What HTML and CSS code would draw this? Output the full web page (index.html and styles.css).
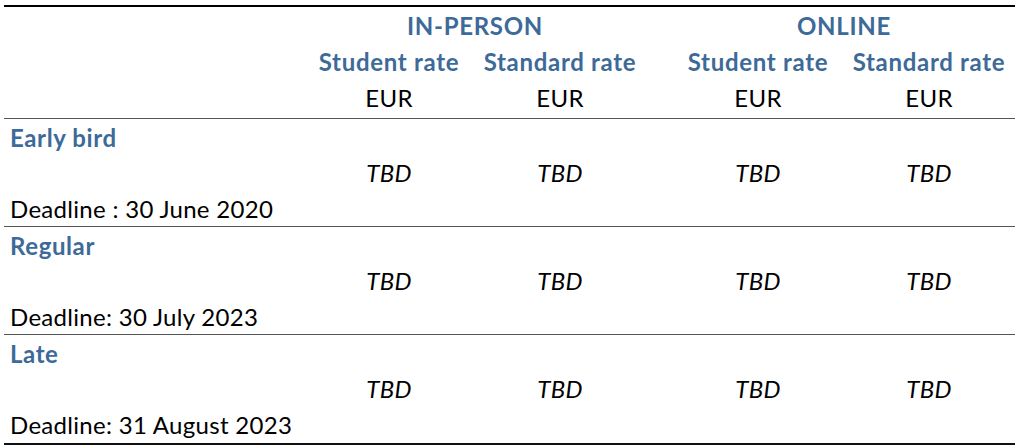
FILE: index.html
```html
<!DOCTYPE html>
<html lang="en">
<head>
<meta charset="utf-8">
<title>Fees</title>
<link rel="stylesheet" href="styles.css">
</head>
<body>
<div class="fees">
  <div class="head">
    <div class="grp g1">IN-PERSON</div>
    <div class="grp g2">ONLINE</div>
    <div class="rate c1">Student rate</div>
    <div class="rate c2">Standard rate</div>
    <div class="rate c3">Student rate</div>
    <div class="rate c4">Standard rate</div>
    <div class="cur c1">EUR</div>
    <div class="cur c2">EUR</div>
    <div class="cur c3">EUR</div>
    <div class="cur c4">EUR</div>
  </div>
  <div class="row">
    <div class="label">Early bird</div>
    <div class="val c1">TBD</div>
    <div class="val c2">TBD</div>
    <div class="val c3">TBD</div>
    <div class="val c4">TBD</div>
    <div class="deadline">Deadline : 30 June 2020</div>
  </div>
  <div class="row">
    <div class="label">Regular</div>
    <div class="val c1">TBD</div>
    <div class="val c2">TBD</div>
    <div class="val c3">TBD</div>
    <div class="val c4">TBD</div>
    <div class="deadline">Deadline: 30 July 2023</div>
  </div>
  <div class="row last">
    <div class="label">Late</div>
    <div class="val c1">TBD</div>
    <div class="val c2">TBD</div>
    <div class="val c3">TBD</div>
    <div class="val c4">TBD</div>
    <div class="deadline">Deadline: 31 August 2023</div>
  </div>
</div>
</body>
</html>
```
FILE: styles.css
```css
html, body {
  margin: 0;
  padding: 0;
  background: #ffffff;
}
body {
  padding: 5px 9px 0 4px;
  font-family: "Lato", "Liberation Sans", sans-serif;
  font-size: 24px;
  letter-spacing: 0.3px;
  color: #000000;
}
.fees {
  width: 1011px;
  border-top: 2px solid #000000;
  border-bottom: 2px solid #111111;
}
.head, .row {
  display: grid;
  grid-template-columns: 300px 170px 172px 27px 170px 172px;
  white-space: nowrap;
}
.head {
  grid-template-rows: 36px 37px 35px;
  padding-bottom: 3px;
  border-bottom: 1px solid #555555;
}
.row {
  grid-template-rows: 35px 35px 36px;
  padding-top: 1px;
  border-bottom: 1px solid #555555;
}
.row.last {
  border-bottom: none;
  padding-bottom: 1px;
}
.grp, .rate {
  color: #3d6a98;
  font-weight: 700;
  letter-spacing: 0.7px;
  text-align: center;
  align-self: center;
}
.grp { grid-row: 1; }
.g1 { grid-column: 2 / 4; }
.g2 { grid-column: 5 / 7; }
.rate { grid-row: 2; }
.cur { grid-row: 3; text-align: center; align-self: center; }
.c1 { grid-column: 2; }
.c2 { grid-column: 3; }
.c3 { grid-column: 5; }
.c4 { grid-column: 6; }
.label {
  grid-row: 1;
  grid-column: 1;
  padding-left: 6px;
  color: #3d6a98;
  font-weight: 700;
  letter-spacing: 0.6px;
  align-self: center;
}
.val {
  grid-row: 2;
  text-align: center;
  font-style: italic;
  align-self: center;
}
.deadline {
  grid-row: 3;
  grid-column: 1 / 3;
  padding-left: 6px;
  align-self: center;
}
```
